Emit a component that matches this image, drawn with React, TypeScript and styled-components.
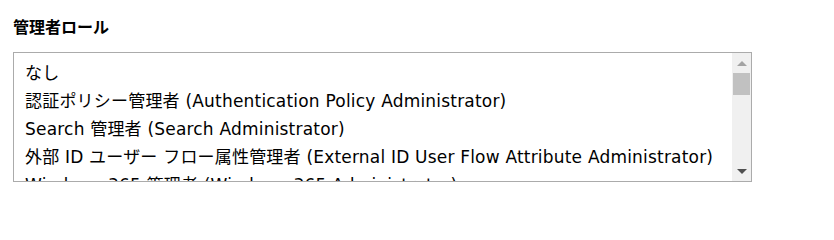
import * as React from 'react';
import styled, { createGlobalStyle } from 'styled-components';

const GlobalStyle = createGlobalStyle`
  html, body {
    margin: 0;
    padding: 0;
    background: #ffffff;
  }
  body {
    font-family: 'DejaVu Sans', 'Noto Sans CJK JP', sans-serif;
    color: #000000;
  }
`;

const Container = styled.div`
  padding: 14px 13px 0 13px;
  width: 834px;
  height: 200px;
  box-sizing: border-box;
`;

const Label = styled.div`
  font-family: 'Noto Sans CJK JP', sans-serif;
  font-weight: bold;
  font-size: 16px;
  line-height: 24px;
  margin-bottom: 14px;
`;

const ListBox = styled.div`
  display: flex;
  width: 739px;
  height: 130px;
  box-sizing: border-box;
  border: 1px solid #ababab;
  background: #ffffff;
  overflow: hidden;
`;

const Options = styled.ul`
  flex: 1;
  margin: 0;
  padding: 6px 0 0 11px;
  list-style: none;
  overflow: hidden;
`;

const Option = styled.li`
  font-size: 17px;
  letter-spacing: 0.2px;
  line-height: 28px;
  height: 28px;
  white-space: nowrap;
`;

const ScrollBar = styled.div`
  width: 19px;
  display: flex;
  flex-direction: column;
  align-items: center;
  background: #f0f0f0;
`;

const Arrow = styled.div<{ $dir: 'up' | 'down'; $active?: boolean }>`
  height: 20px;
  width: 100%;
  display: flex;
  align-items: center;
  justify-content: center;
  &::before {
    content: '';
    width: 0;
    height: 0;
    border-left: 5px solid transparent;
    border-right: 5px solid transparent;
    ${(p) =>
      p.$dir === 'up'
        ? `border-bottom: 5px solid ${p.$active ? '#505050' : '#a3a3a3'};`
        : `border-top: 5px solid ${p.$active ? '#505050' : '#a3a3a3'};`}
  }
`;

const Track = styled.div`
  flex: 1;
  width: 100%;
  display: flex;
  justify-content: center;
`;

const Thumb = styled.div`
  width: 17px;
  height: 22px;
  background: #c1c1c1;
`;

const roles = [
  'なし',
  '認証ポリシー管理者 (Authentication Policy Administrator)',
  'Search 管理者 (Search Administrator)',
  '外部 ID ユーザー フロー属性管理者 (External ID User Flow Attribute Administrator)',
  'Windows 365 管理者 (Windows 365 Administrator)',
];

export default function App() {
  return (
    <Container>
      <GlobalStyle />
      <Label>管理者ロール</Label>
      <ListBox>
        <Options>
          {roles.map((role, index) => (
            <Option key={index}>{role}</Option>
          ))}
        </Options>
        <ScrollBar>
          <Arrow $dir="up" />
          <Track>
            <Thumb />
          </Track>
          <Arrow $dir="down" $active />
        </ScrollBar>
      </ListBox>
    </Container>
  );
}
